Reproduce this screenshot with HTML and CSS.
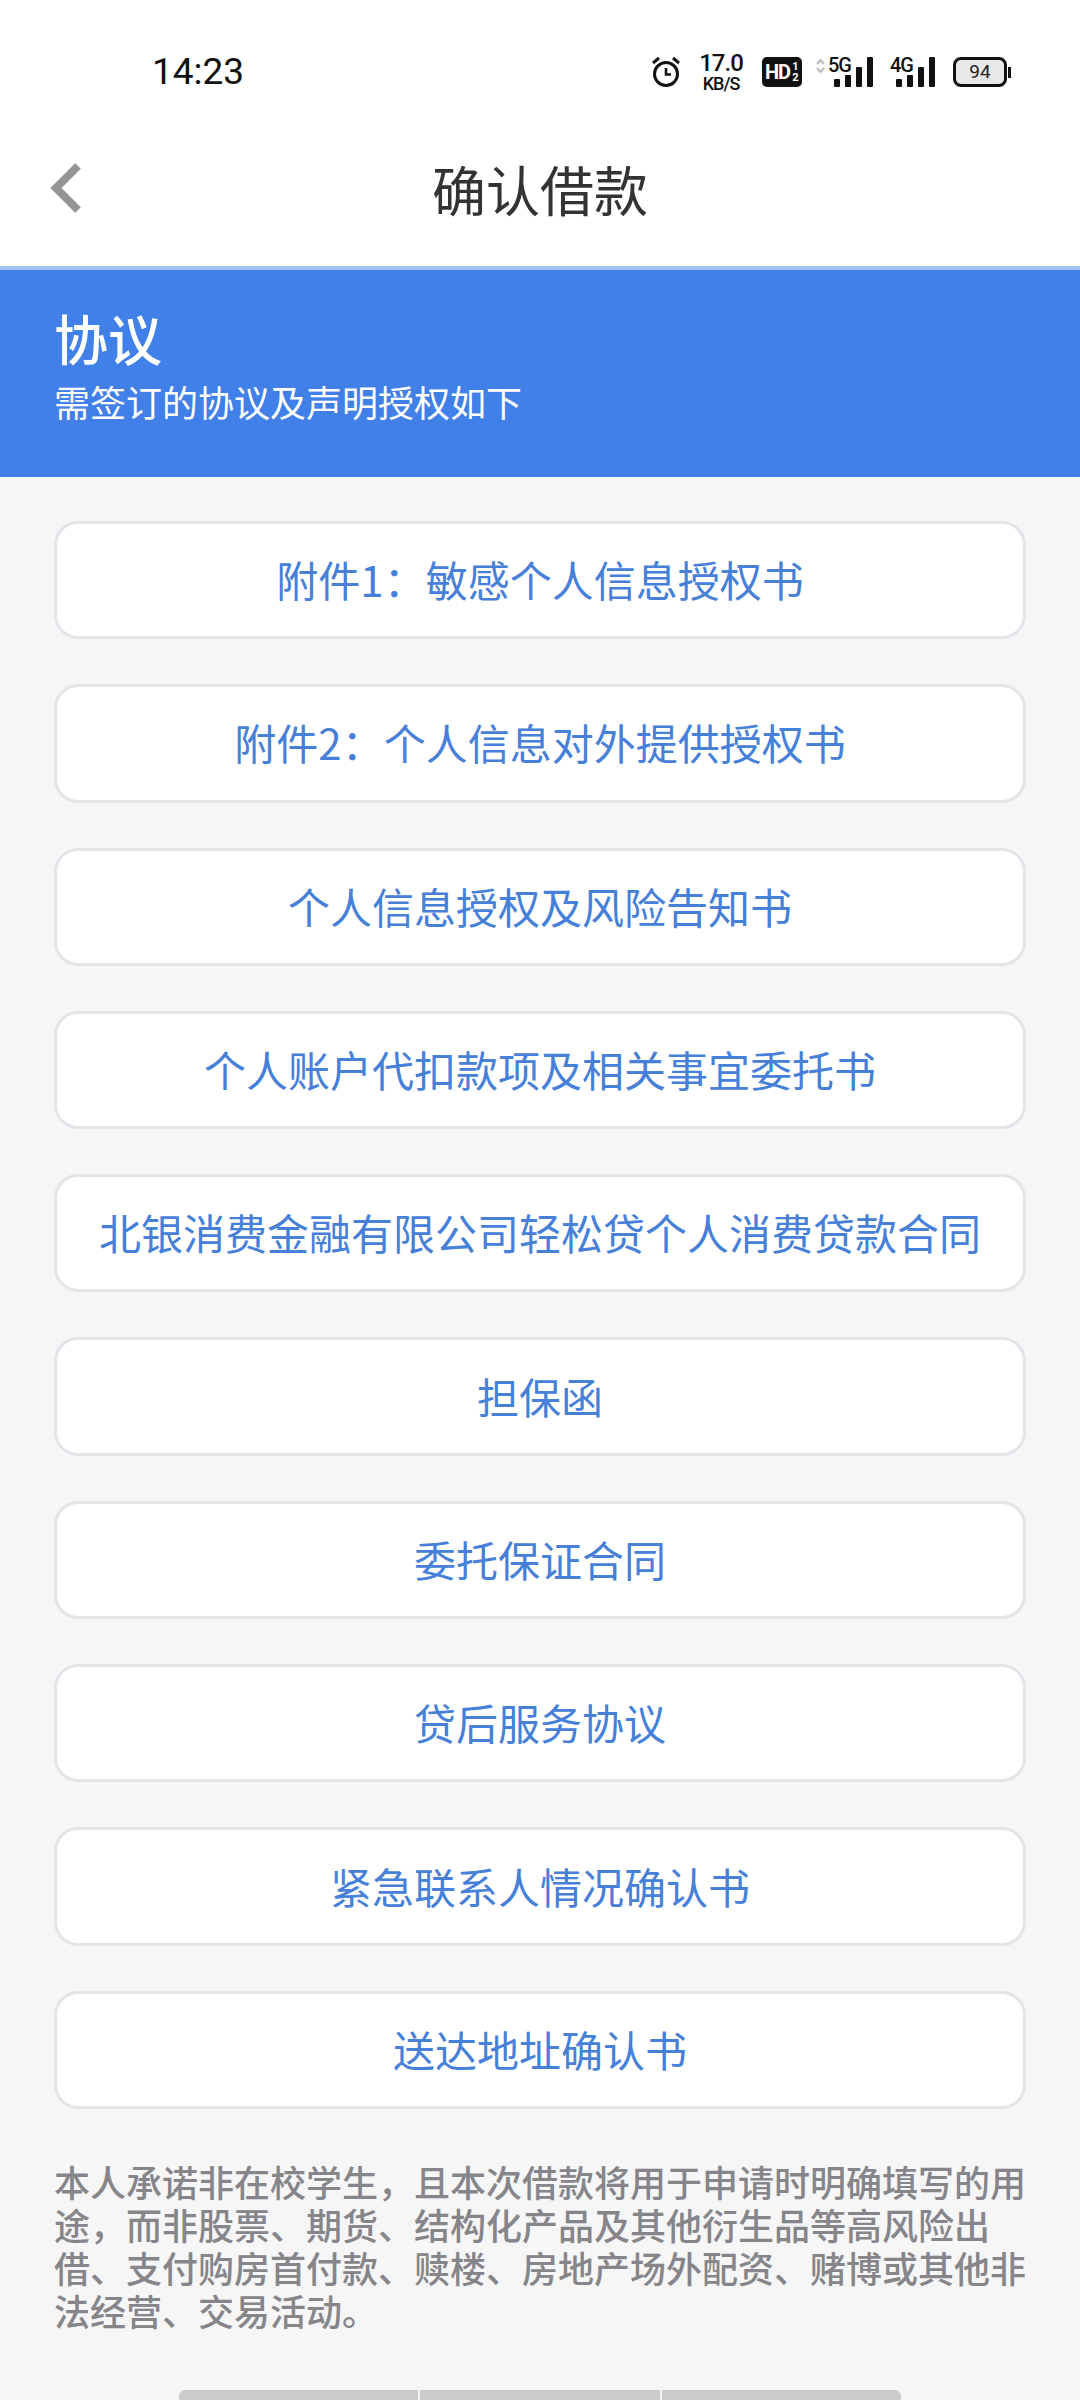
FILE: index.html
```html
<!DOCTYPE html>
<html lang="zh-CN">
<head>
    <meta charset="UTF-8">
    <title>确认借款</title>
    <link rel="stylesheet" href="styles.css">
</head>
<body>
    <div class="status-bar">
        <span class="time">14:23</span>
        <div class="status-icons">
            <svg class="alarm" width="30" height="32" viewBox="0 0 30 32">
                <circle cx="15" cy="18" r="11.500" fill="none" stroke="#111" stroke-width="3"/>
                <path d="M15 12v6.500h5" fill="none" stroke="#111" stroke-width="2.600"/>
                <path d="M2 7l6-5M28 7l-6-5" fill="none" stroke="#111" stroke-width="3"/>
            </svg>
            <div class="speed"><span class="speed-num">17.0</span><span class="speed-unit">KB/S</span></div>
            <div class="hd">HD<span class="hd-frac"><i>1</i><i>2</i></span></div>
            <div class="signal">
                <svg class="updown" width="9" height="16" viewBox="0 0 9 16">
                    <path d="M1 6l3.500-4 3.500 4M1 10l3.500 4 3.500-4" fill="none" stroke="#bbb" stroke-width="2"/>
                </svg>
                <span class="net">5G</span>
                <div class="bars"><i class="b1"></i><i class="b2"></i><i class="b3"></i><i class="b4"></i></div>
            </div>
            <div class="signal">
                <span class="net">4G</span>
                <div class="bars"><i class="b1"></i><i class="b2"></i><i class="b3"></i><i class="b4"></i></div>
            </div>
            <div class="battery"><span class="battery-body">94</span><i class="battery-tip"></i></div>
        </div>
    </div>

    <div class="nav">
        <svg class="back" width="32" height="52" viewBox="0 0 32 52">
            <path d="M28 4L6 26l22 22" fill="none" stroke="#949494" stroke-width="8"/>
        </svg>
        <h1>确认借款</h1>
    </div>

    <div class="banner">
        <h2>协议</h2>
        <p>需签订的协议及声明授权如下</p>
    </div>

    <div class="content">
        <a class="doc">附件1：敏感个人信息授权书</a>
        <a class="doc">附件2：个人信息对外提供授权书</a>
        <a class="doc">个人信息授权及风险告知书</a>
        <a class="doc">个人账户代扣款项及相关事宜委托书</a>
        <a class="doc">北银消费金融有限公司轻松贷个人消费贷款合同</a>
        <a class="doc">担保函</a>
        <a class="doc">委托保证合同</a>
        <a class="doc">贷后服务协议</a>
        <a class="doc">紧急联系人情况确认书</a>
        <a class="doc">送达地址确认书</a>
        <p class="notice">本人承诺非在校学生，且本次借款将用于申请时明确填写的用途，而非股票、期货、结构化产品及其他衍生品等高风险出借、支付购房首付款、赎楼、房地产场外配资、赌博或其他非法经营、交易活动。</p>
    </div>

    <div class="bottom-bar">
        <i></i><i></i><i></i>
    </div>
</body>
</html>
```

FILE: styles.css
```css
* {
    box-sizing: border-box;
}
html, body {
    margin: 0;
    height: 2400px;
    overflow: hidden;
}
body {
    font-family: "Noto Sans CJK SC", "Noto Sans", sans-serif;
    background-color: #f6f6f6;
    display: flex;
    flex-direction: column;
}
.status-bar {
    height: 120px;
    background-color: #fff;
    display: flex;
    justify-content: space-between;
    padding: 50px 69px 0 152px;
    color: #111;
}
.time {
    font-family: "Roboto", sans-serif;
    font-size: 37px;
    line-height: 44px;
}
.status-icons {
    display: flex;
    align-items: flex-start;
    font-family: "Roboto", sans-serif;
}
.alarm {
    margin: 6px 18px 0 0;
}
.speed {
    display: flex;
    flex-direction: column;
    align-items: center;
    width: 44px;
    margin: 3px 19px 0 0;
    font-weight: 500;
}
.speed-num {
    font-size: 24px;
    line-height: 20px;
    letter-spacing: -1px;
}
.speed-unit {
    font-size: 18px;
    line-height: 18px;
    margin-top: 2px;
    letter-spacing: -1px;
}
.hd {
    width: 40px;
    height: 30px;
    margin: 7px 14px 0 0;
    background-color: #111;
    border-radius: 5px;
    color: #fff;
    font-size: 20px;
    font-weight: 700;
    line-height: 30px;
    letter-spacing: -1px;
    padding-left: 3px;
    display: flex;
}
.hd-frac {
    display: flex;
    flex-direction: column;
    font-size: 11px;
    line-height: 11px;
    padding: 4px 0 0 2px;
    letter-spacing: 0;
}
.hd-frac i {
    font-style: normal;
}
.signal {
    display: flex;
    align-items: flex-start;
    margin-right: 17px;
    height: 40px;
}
.updown {
    margin: 8px 3px 0 0;
}
.net {
    font-size: 20px;
    line-height: 20px;
    font-weight: 500;
    margin-top: 5px;
    width: 22px;
    letter-spacing: -1px;
}
.bars {
    display: flex;
    align-items: flex-end;
    gap: 5px;
    height: 30px;
    margin: 7px 0 0 -16px;
}
.bars i {
    width: 6px;
    background-color: #111;
    border-radius: 1px;
}
.bars .b1 {
    height: 8px;
}
.bars .b2 {
    height: 12px;
}
.bars .b3 {
    height: 20px;
}
.bars .b4 {
    height: 30px;
}
.battery {
    display: flex;
    align-items: center;
    margin: 7px 0 0 1px;
}
.battery-body {
    width: 54px;
    height: 30px;
    border: 3px solid #111;
    border-radius: 8px;
    background-color: #e8e8e8;
    font-size: 19px;
    line-height: 24px;
    text-align: center;
    color: #222;
}
.battery-tip {
    width: 3px;
    height: 11px;
    margin-left: 1px;
    background-color: #111;
}
.nav {
    height: 146px;
    background-color: #fff;
    position: relative;
    display: flex;
    align-items: center;
    justify-content: center;
}
.nav h1 {
    margin: 0;
    font-size: 54px;
    font-weight: 400;
    color: #333;
    line-height: 70px;
    padding-bottom: 8px;
}
.back {
    position: absolute;
    left: 50px;
    top: 42px;
}
.banner {
    height: 211px;
    background-color: #4080e8;
    border-top: 4px solid #a3c2f2;
    padding: 35px 54px 0;
    color: #fff;
}
.banner h2 {
    margin: 0;
    font-size: 54px;
    font-weight: 500;
    line-height: 66px;
}
.banner p {
    margin: 6px 0 0;
    font-size: 36px;
    font-weight: 400;
    line-height: 48px;
}
.content {
    padding: 44px 54px 0;
    display: flex;
    flex-direction: column;
    gap: 45px;
}
.doc {
    height: 118.300px;
    background-color: #fff;
    border: 3px solid #e4e4ea;
    border-radius: 24px;
    display: flex;
    align-items: center;
    justify-content: center;
    padding-bottom: 3px;
    color: #4680d8;
    font-size: 42px;
    white-space: nowrap;
}
.notice {
    margin: 6px -6px 0 0;
    font-size: 36px;
    line-height: 43px;
    font-weight: 500;
    color: #85858a;
}
.bottom-bar {
    position: absolute;
    left: 179px;
    top: 2390px;
    width: 722px;
    height: 10px;
    display: flex;
    gap: 2px;
    border-radius: 6px 6px 0 0;
    overflow: hidden;
}
.bottom-bar i {
    flex: 1;
    background-color: #cccccc;
}
```
